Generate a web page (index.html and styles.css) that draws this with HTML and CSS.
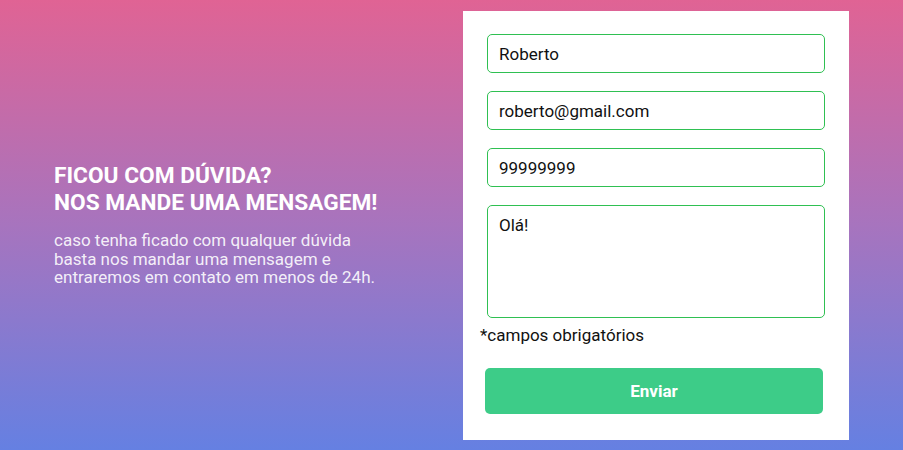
FILE: index.html
```html
<!DOCTYPE html>
<html lang="pt">
<head>
<meta charset="utf-8">
<title>Contato</title>
<link rel="stylesheet" href="styles.css">
</head>
<body>
<main class="page">
  <section class="intro">
    <h1 class="intro-title">FICOU COM DÚVIDA?<br>NOS MANDE UMA MENSAGEM!</h1>
    <p class="intro-text">caso tenha ficado com qualquer dúvida<br>basta nos mandar uma mensagem e<br>entraremos em contato em menos de 24h.</p>
  </section>
  <form class="card">
    <input class="field" type="text" value="Roberto">
    <input class="field" type="email" value="roberto@gmail.com">
    <input class="field" type="text" value="99999999">
    <textarea class="field field-area">Olá!</textarea>
    <p class="note">*campos obrigatórios</p>
    <button class="submit" type="button">Enviar</button>
  </form>
</main>
</body>
</html>
```

FILE: styles.css
```css
html, body {
  margin: 0;
  padding: 0;
  height: 100%;
}
body {
  font-family: Roboto, "Liberation Sans", sans-serif;
  background: linear-gradient(180deg, #e06394 0%, #a774be 50%, #6580e2 100%);
}
.page {
  display: flex;
  align-items: flex-start;
  height: 450px;
  box-sizing: border-box;
  padding: 11px 0 0 54px;
}
.intro {
  width: 409px;
  padding-top: 151px;
}
.intro-title {
  margin: 0;
  color: #fff;
  font-size: 22.7px;
  font-weight: 700;
  line-height: 27px;
}
.intro-text {
  margin: 15px 0 0;
  color: rgba(255,255,255,0.9);
  font-size: 17px;
  line-height: 18.6px;
}
.card {
  width: 386px;
  height: 429px;
  box-sizing: border-box;
  background: #fff;
  padding: 23px 24px 0 24px;
  display: flex;
  flex-direction: column;
  margin: 0;
}
.field {
  display: block;
  width: 338px;
  height: 39px;
  box-sizing: border-box;
  border: 1px solid #2fc052;
  border-radius: 5px;
  padding: 0 11px;
  font-family: Roboto, "Liberation Sans", sans-serif;
  font-size: 17px;
  color: #111;
  background: #fff;
  margin: 0 0 18px 0;
  outline: none;
}
.field-area {
  height: 113px;
  padding-top: 9px;
  resize: none;
  margin-bottom: 0;
}
.note {
  margin: 7px 0 0 -7px;
  font-size: 17px;
  line-height: 20px;
  color: #111;
}
.submit {
  margin: 23px 0 0 -2px;
  width: 338px;
  height: 46px;
  border: none;
  border-radius: 5px;
  background: #3dcc88;
  color: #fff;
  font-family: Roboto, "Liberation Sans", sans-serif;
  font-size: 17px;
  font-weight: 700;
}
```
